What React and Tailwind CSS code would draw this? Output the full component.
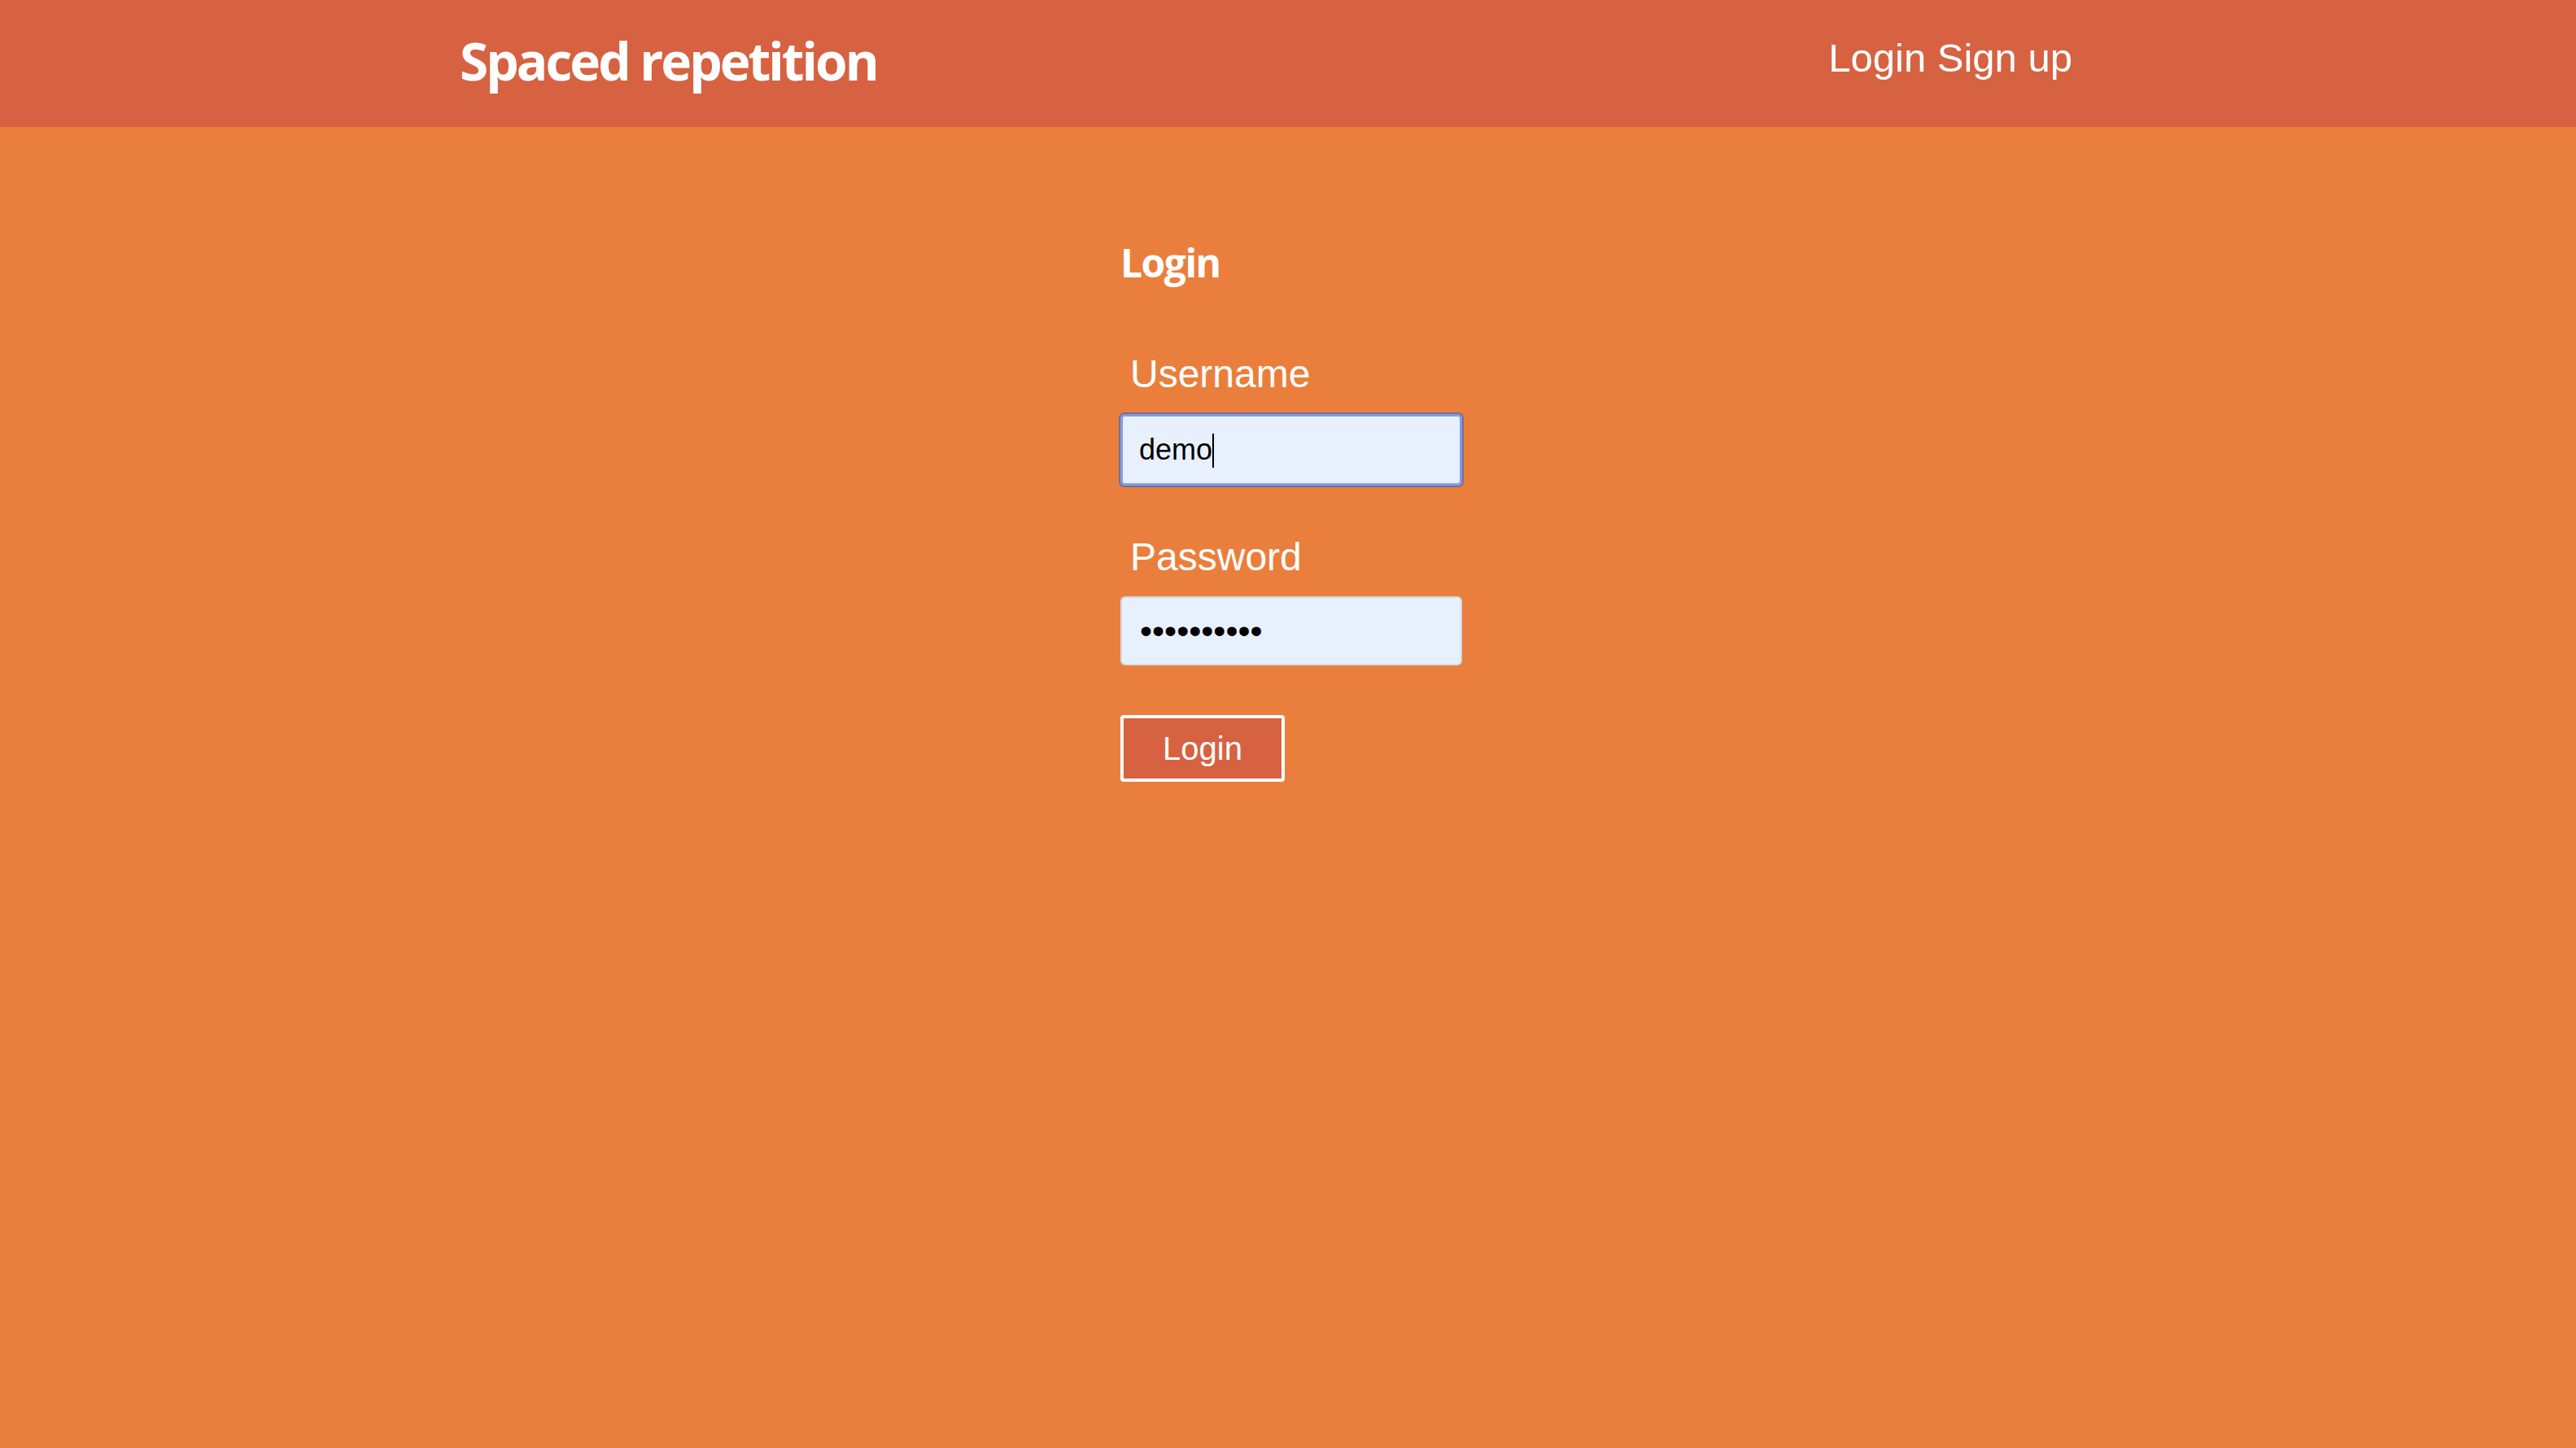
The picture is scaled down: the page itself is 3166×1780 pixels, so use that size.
const Field = ({ label, labelTop, children }) => (
    <div>
        <label className={`block h-[48px] pl-[12px] text-[48px] leading-[48px] text-white ${labelTop}`}>
            {label}
        </label>
        {children}
    </div>
)

export default function App() {
    return (
        <div className="min-h-screen bg-[#ea7f3d] font-['Liberation_Sans',Arial,sans-serif]">
            <header className="h-[156px] bg-[#d66241] flex items-start justify-between pl-[565px] pr-[619px]">
                <h1 className="pt-[43px] font-['Open_Sans','Noto_Sans',sans-serif] text-[64px] font-bold leading-[64px] tracking-[-3px] text-white">
                    Spaced repetition
                </h1>
                <nav className="pt-[47px] text-[49px] leading-[48px] text-white">
                    <a href="#">Login</a> <a href="#">Sign up</a>
                </nav>
            </header>
            <main className="flex justify-center pl-[8px]">
                <form className="w-[420px] pt-[143px]" onSubmit={(e) => e.preventDefault()}>
                    <h2 className="h-[48px] font-['Open_Sans','Noto_Sans',sans-serif] text-[48px] font-bold leading-[48px] tracking-[-1.5px] text-white">
                        Login
                    </h2>
                    <Field label="Username" labelTop="mt-[89px]">
                        <div className="relative mt-[25px] rounded-[5px] shadow-[0_0_0_2px_rgba(90,100,170,0.75)]">
                            <input
                                className="block h-[88px] w-full rounded-[5px] border-[3px] border-[#7d9ee9] bg-[#e8f0fe] pl-[20px] text-[36px] text-black caret-transparent outline-none"
                                defaultValue="demo"
                                readOnly
                            />
                            <span className="absolute left-[113px] top-[24px] h-[42px] w-[2px] bg-black" />
                        </div>
                    </Field>
                    <Field label="Password" labelTop="mt-[64px]">
                        <input
                            type="password"
                            className="mt-[24px] block h-[85px] w-full rounded-[6px] border-2 border-[#d3d9e2] bg-[#e8f0fe] pl-[22px] text-[43px] text-black outline-none"
                            defaultValue="demodemo12"
                            readOnly
                        />
                    </Field>
                    <button
                        type="submit"
                        className="mt-[61px] block h-[82px] w-[202px] rounded-[4px] border-[4px] border-white bg-[#d66241] text-[40px] leading-none text-white"
                    >
                        Login
                    </button>
                </form>
            </main>
        </div>
    )
}
